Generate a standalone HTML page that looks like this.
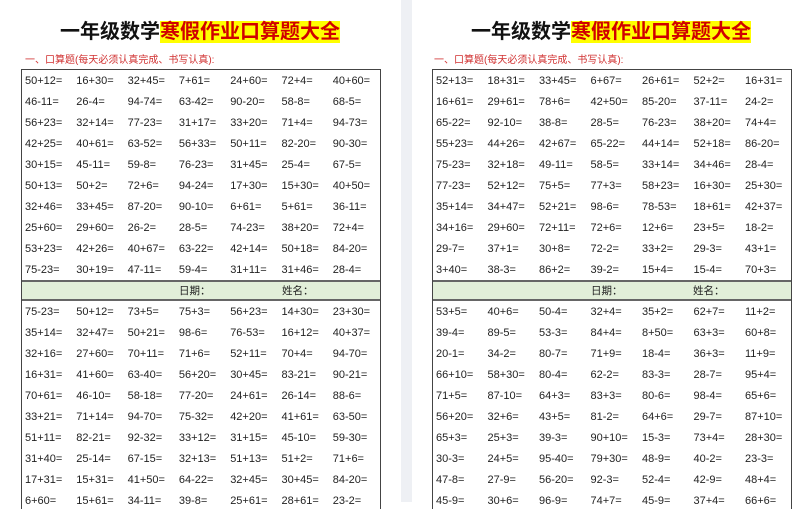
<!DOCTYPE html>
<html><head><meta charset="utf-8"><style>
*{margin:0;padding:0;box-sizing:border-box}
body{width:800px;height:502px;overflow:hidden;background:#fff;font-family:"Liberation Sans","Noto Sans CJK SC",sans-serif;position:relative}
.gap{position:absolute;left:401px;top:0;width:11px;height:502px;background:#eef0f4}
.page{position:absolute;top:0;height:502px}
.title{position:absolute;top:17px;font-size:20px;font-weight:bold;color:#111;font-family:"Liberation Sans","Noto Sans CJK SC",sans-serif;white-space:nowrap;line-height:30px}
.title span{background:#ffff00;color:#d00000}
.sub{position:absolute;top:51px;font-size:10px;color:#d03030;white-space:nowrap}
.tbl{position:absolute;top:69px;border:1px solid #444;border-bottom:none;height:440px}
.r{height:21px;display:flex;align-items:center;font-size:11px;color:#222;white-space:nowrap}
.r div{flex:none}
.band{height:21px;background:#e2efd9;border-top:2px solid #666;border-bottom:2px solid #666;display:flex;align-items:center;font-size:10.5px;color:#222;position:relative}
</style></head><body>
<div class="gap"></div>

<div class="page" style="left:0;width:401px">
<div class="title" style="left:60px">一年级数学<span>寒假作业口算题大全</span></div>
<div class="sub" style="left:25px">一、口算题(每天必须认真完成、书写认真):</div>
<div class="tbl" style="left:21px;width:360px;padding-left:3px">
<style>.L .r div{width:51.3px}</style>
<div class="L">
<div class="r"><div>50+12=</div><div>16+30=</div><div>32+45=</div><div>7+61=</div><div>24+60=</div><div>72+4=</div><div>40+60=</div></div>
<div class="r"><div>46-11=</div><div>26-4=</div><div>94-74=</div><div>63-42=</div><div>90-20=</div><div>58-8=</div><div>68-5=</div></div>
<div class="r"><div>56+23=</div><div>32+14=</div><div>77-23=</div><div>31+17=</div><div>33+20=</div><div>71+4=</div><div>94-73=</div></div>
<div class="r"><div>42+25=</div><div>40+61=</div><div>63-52=</div><div>56+33=</div><div>50+11=</div><div>82-20=</div><div>90-30=</div></div>
<div class="r"><div>30+15=</div><div>45-11=</div><div>59-8=</div><div>76-23=</div><div>31+45=</div><div>25-4=</div><div>67-5=</div></div>
<div class="r"><div>50+13=</div><div>50+2=</div><div>72+6=</div><div>94-24=</div><div>17+30=</div><div>15+30=</div><div>40+50=</div></div>
<div class="r"><div>32+46=</div><div>33+45=</div><div>87-20=</div><div>90-10=</div><div>6+61=</div><div>5+61=</div><div>36-11=</div></div>
<div class="r"><div>25+60=</div><div>29+60=</div><div>26-2=</div><div>28-5=</div><div>74-23=</div><div>38+20=</div><div>72+4=</div></div>
<div class="r"><div>53+23=</div><div>42+26=</div><div>40+67=</div><div>63-22=</div><div>42+14=</div><div>50+18=</div><div>84-20=</div></div>
<div class="r"><div>75-23=</div><div>30+19=</div><div>47-11=</div><div>59-4=</div><div>31+11=</div><div>31+46=</div><div>28-4=</div></div>
</div>
<div class="band" style="margin-left:-3px"><span style="position:absolute;left:157px">日期：</span><span style="position:absolute;left:260px">姓名：</span></div>
<div class="L">
<div class="r"><div>75-23=</div><div>50+12=</div><div>73+5=</div><div>75+3=</div><div>56+23=</div><div>14+30=</div><div>23+30=</div></div>
<div class="r"><div>35+14=</div><div>32+47=</div><div>50+21=</div><div>98-6=</div><div>76-53=</div><div>16+12=</div><div>40+37=</div></div>
<div class="r"><div>32+16=</div><div>27+60=</div><div>70+11=</div><div>71+6=</div><div>52+11=</div><div>70+4=</div><div>94-70=</div></div>
<div class="r"><div>16+31=</div><div>41+60=</div><div>63-40=</div><div>56+20=</div><div>30+45=</div><div>83-21=</div><div>90-21=</div></div>
<div class="r"><div>70+61=</div><div>46-10=</div><div>58-18=</div><div>77-20=</div><div>24+61=</div><div>26-14=</div><div>88-6=</div></div>
<div class="r"><div>33+21=</div><div>71+14=</div><div>94-70=</div><div>75-32=</div><div>42+20=</div><div>41+61=</div><div>63-50=</div></div>
<div class="r"><div>51+11=</div><div>82-21=</div><div>92-32=</div><div>33+12=</div><div>31+15=</div><div>45-10=</div><div>59-30=</div></div>
<div class="r"><div>31+40=</div><div>25-14=</div><div>67-15=</div><div>32+13=</div><div>51+13=</div><div>51+2=</div><div>71+6=</div></div>
<div class="r"><div>17+31=</div><div>15+31=</div><div>41+50=</div><div>64-22=</div><div>32+45=</div><div>30+45=</div><div>84-20=</div></div>
<div class="r"><div>6+60=</div><div>15+61=</div><div>34-11=</div><div>39-8=</div><div>25+61=</div><div>28+61=</div><div>23-2=</div></div>
</div>
</div>
</div>

<div class="page" style="left:412px;width:388px">
<div class="title" style="left:59px">一年级数学<span>寒假作业口算题大全</span></div>
<div class="sub" style="left:22px">一、口算题(每天必须认真完成、书写认真):</div>
<div class="tbl" style="left:20px;width:360px;padding-left:3px">
<style>.R .r div{width:51.5px}</style>
<div class="R">
<div class="r"><div>52+13=</div><div>18+31=</div><div>33+45=</div><div>6+67=</div><div>26+61=</div><div>52+2=</div><div>16+31=</div></div>
<div class="r"><div>16+61=</div><div>29+61=</div><div>78+6=</div><div>42+50=</div><div>85-20=</div><div>37-11=</div><div>24-2=</div></div>
<div class="r"><div>65-22=</div><div>92-10=</div><div>38-8=</div><div>28-5=</div><div>76-23=</div><div>38+20=</div><div>74+4=</div></div>
<div class="r"><div>55+23=</div><div>44+26=</div><div>42+67=</div><div>65-22=</div><div>44+14=</div><div>52+18=</div><div>86-20=</div></div>
<div class="r"><div>75-23=</div><div>32+18=</div><div>49-11=</div><div>58-5=</div><div>33+14=</div><div>34+46=</div><div>28-4=</div></div>
<div class="r"><div>77-23=</div><div>52+12=</div><div>75+5=</div><div>77+3=</div><div>58+23=</div><div>16+30=</div><div>25+30=</div></div>
<div class="r"><div>35+14=</div><div>34+47=</div><div>52+21=</div><div>98-6=</div><div>78-53=</div><div>18+61=</div><div>42+37=</div></div>
<div class="r"><div>34+16=</div><div>29+60=</div><div>72+11=</div><div>72+6=</div><div>12+6=</div><div>23+5=</div><div>18-2=</div></div>
<div class="r"><div>29-7=</div><div>37+1=</div><div>30+8=</div><div>72-2=</div><div>33+2=</div><div>29-3=</div><div>43+1=</div></div>
<div class="r"><div>3+40=</div><div>38-3=</div><div>86+2=</div><div>39-2=</div><div>15+4=</div><div>15-4=</div><div>70+3=</div></div>
</div>
<div class="band" style="margin-left:-3px"><span style="position:absolute;left:158px">日期：</span><span style="position:absolute;left:260px">姓名：</span></div>
<div class="R">
<div class="r"><div>53+5=</div><div>40+6=</div><div>50-4=</div><div>32+4=</div><div>35+2=</div><div>62+7=</div><div>11+2=</div></div>
<div class="r"><div>39-4=</div><div>89-5=</div><div>53-3=</div><div>84+4=</div><div>8+50=</div><div>63+3=</div><div>60+8=</div></div>
<div class="r"><div>20-1=</div><div>34-2=</div><div>80-7=</div><div>71+9=</div><div>18-4=</div><div>36+3=</div><div>11+9=</div></div>
<div class="r"><div>66+10=</div><div>58+30=</div><div>80-4=</div><div>62-2=</div><div>83-3=</div><div>28-7=</div><div>95+4=</div></div>
<div class="r"><div>71+5=</div><div>87-10=</div><div>64+3=</div><div>83+3=</div><div>80-6=</div><div>98-4=</div><div>65+6=</div></div>
<div class="r"><div>56+20=</div><div>32+6=</div><div>43+5=</div><div>81-2=</div><div>64+6=</div><div>29-7=</div><div>87+10=</div></div>
<div class="r"><div>65+3=</div><div>25+3=</div><div>39-3=</div><div>90+10=</div><div>15-3=</div><div>73+4=</div><div>28+30=</div></div>
<div class="r"><div>30-3=</div><div>24+5=</div><div>95-40=</div><div>79+30=</div><div>48-9=</div><div>40-2=</div><div>23-3=</div></div>
<div class="r"><div>47-8=</div><div>27-9=</div><div>56-20=</div><div>92-3=</div><div>52-4=</div><div>42-9=</div><div>48+4=</div></div>
<div class="r"><div>45-9=</div><div>30+6=</div><div>96-9=</div><div>74+7=</div><div>45-9=</div><div>37+4=</div><div>66+6=</div></div>
</div>
</div>
</div>
</body></html>
